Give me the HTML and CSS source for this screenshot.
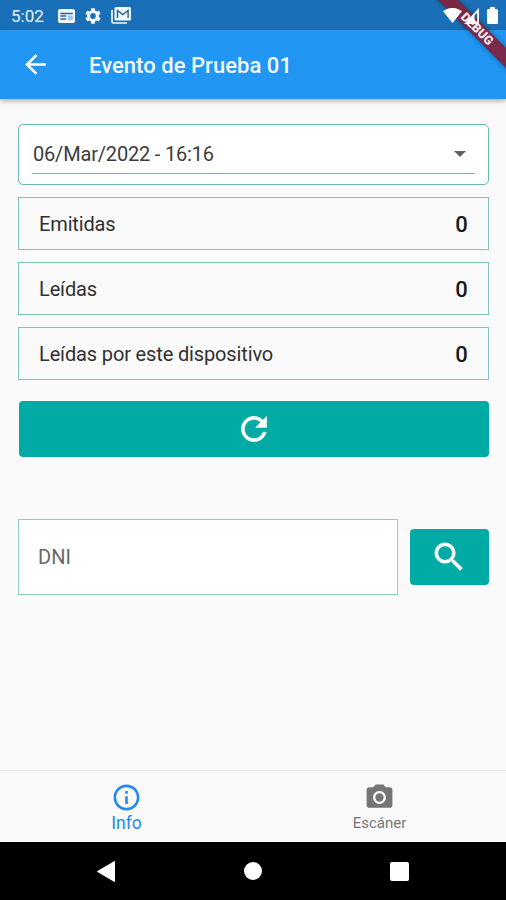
FILE: index.html
```html
<!DOCTYPE html>
<html lang="es">
<head>
<meta charset="utf-8">
<title>Evento de Prueba 01</title>
<link rel="stylesheet" href="styles.css">
</head>
<body>
<div class="screen">
  <div class="status-bar">
    <span class="clock">5:02</span>
    <svg class="st-news" viewBox="0 0 17 14"><rect x="0" y="0" width="17" height="14" rx="2" fill="#f3f8fc"/><path d="M2.200 4.500h12.600M2.200 7h6M2.200 10h6" stroke="#2766a5" stroke-width="1.500"/><rect x="10" y="6.500" width="4.800" height="4.800" fill="#a7c4df"/></svg>
    <svg class="st-gear" viewBox="2 2 20 20"><path fill="#f3f8fc" d="M19.140 12.940c.04-.3.06-.61.06-.94 0-.32-.02-.64-.07-.94l2.030-1.580a.49.49 0 0 0 .12-.61l-1.920-3.320a.488.488 0 0 0-.59-.22l-2.390.96c-.5-.38-1.030-.7-1.620-.94l-.36-2.540a.484.484 0 0 0-.48-.41h-3.840c-.24 0-.43.17-.47.41l-.36 2.540c-.59.24-1.130.57-1.620.94l-2.390-.96c-.22-.08-.47 0-.59.22L2.740 8.870c-.12.21-.08.47.12.61l2.030 1.580c-.05.3-.09.63-.09.94s.02.64.07.94l-2.030 1.580a.49.49 0 0 0-.12.61l1.920 3.320c.12.22.37.29.59.22l2.390-.96c.5.38 1.030.7 1.620.94l.36 2.540c.05.24.24.41.48.41h3.840c.24 0 .44-.17.47-.41l.36-2.540c.59-.24 1.130-.56 1.620-.94l2.390.96c.22.08.47 0 .59-.22l1.920-3.320c.12-.22.07-.47-.12-.61l-2.010-1.580zM12 15.600A3.610 3.610 0 0 1 8.400 12c0-1.980 1.620-3.600 3.600-3.600s3.600 1.620 3.600 3.600-1.620 3.600-3.600 3.600z"/></svg>
    <svg class="st-mail" viewBox="0 0 20 17"><path d="M1 3v11.500q0 1.500 1.500 1.500H16" fill="none" stroke="#f3f8fc" stroke-width="1.700"/><rect x="3.500" y="0" width="16.500" height="13.500" rx="1.500" fill="#f3f8fc"/><path d="M6.500 11V3.500l5.300 4 5.300-4V11" fill="none" stroke="#2766a5" stroke-width="1.500"/></svg>
    <span class="spacer"></span>
    <div class="signals">
      <svg class="st-wifi" viewBox="0 0 19 15"><path fill="#fff" d="M0 3.200C5.500-1.100 13.500-1.100 19 3.200L9.500 15z"/></svg>
      <svg class="st-cell" viewBox="0 0 15 16"><path fill="#fff" fill-rule="evenodd" d="M0 16 15 0v16zM10.500 7.500v6.800h2.700V4.600z"/></svg>
      <svg class="st-batt" viewBox="0 0 11 17"><path fill="#fff" d="M3 0h5v2h1.500Q11 2 11 3.500v12Q11 17 9.500 17h-8Q0 17 0 15.500v-12Q0 2 1.500 2H3z"/></svg>
    </div>
  </div>
  <header class="app-bar">
    <svg class="back" viewBox="0 0 24 24"><path fill="#fff" d="M20 11H7.830l5.590-5.590L12 4l-8 8 8 8 1.410-1.410L7.830 13H20v-2z"/></svg>
    <h1 class="title">Evento de Prueba 01</h1>
  </header>
  <div class="debug-clip"><div class="debug-ribbon">DEBUG</div></div>

  <main class="content">
    <div class="select-card">
      <div class="select">
        <span class="select-text">06/Mar/2022 - 16:16</span>
        <span class="caret"></span>
      </div>
    </div>
    <div class="stat"><span>Emitidas</span><b>0</b></div>
    <div class="stat"><span>Leídas</span><b>0</b></div>
    <div class="stat"><span>Leídas por este dispositivo</span><b>0</b></div>
    <div class="button refresh"><svg viewBox="0 0 24 24"><path fill="#fff" stroke="#fff" stroke-width=".3" d="M17.650 6.350A7.958 7.958 0 0 0 12 4c-4.420 0-7.990 3.580-7.990 8s3.570 8 7.990 8c3.730 0 6.840-2.550 7.730-6h-2.080A5.990 5.990 0 0 1 12 18c-3.310 0-6-2.690-6-6s2.690-6 6-6c1.660 0 3.140.69 4.220 1.780L13 11h7V4l-2.350 2.350z"/></svg></div>
    <div class="search-row">
      <div class="field">DNI</div>
      <div class="button search"><svg viewBox="0 0 24 24"><path fill="#fff" stroke="#fff" stroke-width=".3" d="M15.500 14h-.79l-.28-.27A6.471 6.471 0 0 0 16 9.500 6.500 6.500 0 1 0 9.500 16c1.610 0 3.090-.59 4.230-1.570l.27.28v.79l5 4.990L20.490 19l-4.990-5zm-6 0C7.010 14 5 11.990 5 9.500S7.010 5 9.500 5 14 7.010 14 9.500 11.990 14 9.500 14z"/></svg></div>
    </div>
  </main>

  <nav class="tabs">
    <div class="tab active">
      <svg viewBox="0 0 24 24"><path fill="currentColor" d="M11 7h2v2h-2zm0 4h2v6h-2zm1-9C6.480 2 2 6.480 2 12s4.480 10 10 10 10-4.480 10-10S17.520 2 12 2zm0 18c-4.410 0-8-3.590-8-8s3.590-8 8-8 8 3.590 8 8-3.590 8-8 8z"/></svg>
      <span>Info</span>
    </div>
    <div class="tab">
      <svg viewBox="0 0 24 24"><circle cx="12" cy="12" r="3.200" fill="currentColor"/><path fill="currentColor" d="M9 2 7.170 4H4c-1.100 0-2 .9-2 2v12c0 1.100.9 2 2 2h16c1.100 0 2-.9 2-2V6c0-1.100-.9-2-2-2h-3.170L15 2H9zm3 15c-2.760 0-5-2.240-5-5s2.240-5 5-5 5 2.240 5 5-2.240 5-5 5z"/></svg>
      <span>Escáner</span>
    </div>
  </nav>
  <div class="system-nav">
    <svg class="nav-back" viewBox="0 0 18 21"><path fill="#fff" d="M17.500.5v20L.5 10.500z" stroke="#fff" stroke-linejoin="round"/></svg>
    <span class="nav-home"></span>
    <span class="nav-recent"></span>
  </div>
</div>
</body>
</html>
```
FILE: styles.css
```css
* { box-sizing: border-box; }
body { margin: 0; font-family: Roboto, "Liberation Sans", sans-serif; }
svg { display: block; flex: none; }
.screen {
  position: relative;
  display: flex;
  flex-direction: column;
  width: 506px;
  height: 900px;
  overflow: hidden;
  background: #fafafa;
}
.status-bar {
  display: flex;
  align-items: center;
  height: 30px;
  padding: 1px 8px 0 11px;
  background: #1a70b8;
  color: #e8f3fb;
}
.clock { width: 47px; font-size: 17px; }
.st-news { width: 17px; height: 14px; }
.st-gear { width: 16px; height: 16px; margin-left: 10px; }
.st-mail { width: 20px; height: 17px; margin-left: 10px; }
.spacer { flex: 1; }
/* System icons stay above the debug ribbon. */
.signals {
  position: relative;
  z-index: 2;
  display: flex;
  align-items: center;
}
.st-wifi { width: 19px; height: 15px; }
.st-cell { width: 15px; height: 16px; margin-left: 2px; }
.st-batt { width: 11px; height: 17px; margin-left: 8px; }
.app-bar {
  display: flex;
  align-items: center;
  flex: none;
  height: 69px;
  padding-left: 20px;
  background: #2196f3;
  box-shadow: 0 2px 5px rgba(0, 0, 0, .32);
}
.back { width: 31px; height: 31px; }
.title {
  margin: 2px 0 0 38px;
  color: #f2f9fe;
  font-size: 22px;
  font-weight: 500;
  letter-spacing: .04px;
  white-space: nowrap;
}
.debug-clip {
  position: absolute;
  top: 0;
  right: 0;
  width: 80px;
  height: 80px;
  overflow: hidden;
}
.debug-ribbon {
  position: absolute;
  top: 22px;
  left: -19px;
  width: 140px;
  height: 14px;
  background: rgba(132, 31, 56, .9);
  box-shadow: 0 0 5px rgba(0, 0, 0, .4);
  color: #f5e9ed;
  font-size: 12.5px;
  font-weight: 900;
  line-height: 14px;
  text-align: center;
  transform: rotate(45deg);
}
.content {
  display: flex;
  flex: 1;
  flex-direction: column;
  gap: 12px;
  padding: 25px 17.500px 0 18px;
}
.select-card {
  height: 61px;
  padding: 0 13px 10px;
  border: 1px solid #67bcb4;
  border-radius: 5px;
  background: #fff;
}
.select {
  display: flex;
  align-items: center;
  justify-content: space-between;
  height: 49px;
  padding: 10px 9px 0 1px;
  border-bottom: 1px solid #67bcb4;
}
.select-text { color: #3c3c3c; font-size: 20px; letter-spacing: -.18px; }
.caret {
  border: 6px solid transparent;
  border-top-color: #616161;
  border-bottom-width: 0;
}
.stat {
  display: flex;
  align-items: center;
  justify-content: space-between;
  height: 53px;
  padding: 0 20px 0 20px;
  border: 1px solid #7dc3b9;
  color: #303030;
  font-size: 20px;
  letter-spacing: -.14px;
}
.stat b { padding-top: 1px; color: #181818; font-size: 22px; font-weight: 500; }
.button {
  display: flex;
  align-items: center;
  justify-content: center;
  height: 56px;
  border-radius: 4px;
  background: #00aba5;
}
.refresh { margin: 9px 0 0 1px; }
.refresh svg { width: 38px; height: 38px; }
.search-row {
  display: flex;
  align-items: center;
  gap: 12px;
  margin-top: 50px;
}
.field {
  display: flex;
  align-items: center;
  width: 380px;
  height: 76px;
  padding-left: 19px;
  border: 1px solid #8fcdc4;
  background: #fff;
  color: #686868;
  font-size: 20px;
}
.search { flex: 1; }
.search svg { width: 38px; height: 38px; }
.tabs {
  display: flex;
  flex: none;
  height: 72px;
  border-top: 1px solid #eeeeee;
}
.tab {
  display: flex;
  flex: 1;
  flex-direction: column;
  align-items: center;
  padding-top: 11px;
  color: #757575;
  font-size: 15px;
}
.tab svg { width: 31px; height: 31px; }
.tab span { line-height: 20px; }
.tab.active { color: #2389ea; font-size: 17.500px; }
.system-nav {
  display: flex;
  flex: none;
  align-items: center;
  justify-content: space-between;
  height: 58px;
  padding: 0 97px 0 97px;
  background: #000;
}
.nav-back { width: 18px; height: 21px; }
.nav-home { width: 18px; height: 18px; border-radius: 50%; background: #fff; }
.nav-recent { width: 19px; height: 19px; border-radius: 2px; background: #fff; }
```
